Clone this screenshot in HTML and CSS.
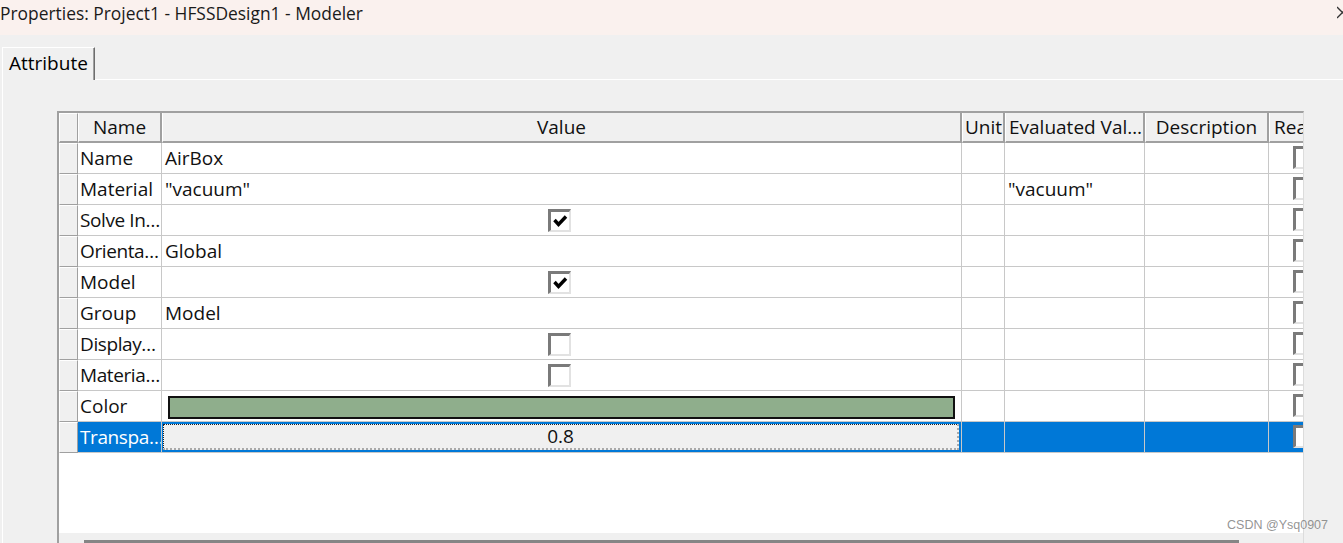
FILE: index.html
```html
<!DOCTYPE html>
<html>
<head>
<meta charset="utf-8">
<link rel="stylesheet" href="styles.css">
</head>
<body>
<div class="window">
  <div class="titlebar">
    <span class="title">Properties: Project1 - HFSSDesign1 - Modeler</span>
    <svg class="close" width="6" height="14" viewBox="0 0 6 14"><path d="M0 2 L11 13 M11 2 L0 13" stroke="#333" stroke-width="1.3" fill="none"/></svg>
  </div>
  <div class="main">
    <div class="tabs">
      <div class="tab">Attribute</div>
      <div class="tab-fill"></div>
    </div>
    <div class="page">
      <div class="grid">
        <div class="row head">
          <div class="rh"></div>
          <div class="hc">Name</div>
          <div class="hc">Value</div>
          <div class="hc">Unit</div>
          <div class="hc">Evaluated Val…</div>
          <div class="hc">Description</div>
          <div class="hc">Read-only</div>
        </div>
        <div class="row">
          <div class="rh"></div><div class="c">Name</div><div class="c">AirBox</div><div class="c"></div><div class="c"></div><div class="c"></div><div class="c ro"><span class="cb"></span></div>
        </div>
        <div class="row">
          <div class="rh"></div><div class="c">Material</div><div class="c">"vacuum"</div><div class="c"></div><div class="c">"vacuum"</div><div class="c"></div><div class="c ro"><span class="cb"></span></div>
        </div>
        <div class="row">
          <div class="rh"></div><div class="c trunc">Solve In…</div><div class="c center"><span class="cb"><svg width="18" height="18" viewBox="0 0 18 18"><path d="M3.5 8 L7.5 12.5 L15 4.5" stroke="#000" stroke-width="3.4" fill="none"/></svg></span></div><div class="c"></div><div class="c"></div><div class="c"></div><div class="c ro"><span class="cb"></span></div>
        </div>
        <div class="row">
          <div class="rh"></div><div class="c trunc">Orienta…</div><div class="c">Global</div><div class="c"></div><div class="c"></div><div class="c"></div><div class="c ro"><span class="cb"></span></div>
        </div>
        <div class="row">
          <div class="rh"></div><div class="c">Model</div><div class="c center"><span class="cb"><svg width="18" height="18" viewBox="0 0 18 18"><path d="M3.5 8 L7.5 12.5 L15 4.5" stroke="#000" stroke-width="3.4" fill="none"/></svg></span></div><div class="c"></div><div class="c"></div><div class="c"></div><div class="c ro"><span class="cb"></span></div>
        </div>
        <div class="row">
          <div class="rh"></div><div class="c">Group</div><div class="c">Model</div><div class="c"></div><div class="c"></div><div class="c"></div><div class="c ro"><span class="cb"></span></div>
        </div>
        <div class="row">
          <div class="rh"></div><div class="c trunc">Display…</div><div class="c center"><span class="cb"></span></div><div class="c"></div><div class="c"></div><div class="c"></div><div class="c ro"><span class="cb"></span></div>
        </div>
        <div class="row">
          <div class="rh"></div><div class="c trunc">Materia…</div><div class="c center"><span class="cb"></span></div><div class="c"></div><div class="c"></div><div class="c"></div><div class="c ro"><span class="cb"></span></div>
        </div>
        <div class="row">
          <div class="rh"></div><div class="c">Color</div><div class="c swcell"><span class="swatch"></span></div><div class="c"></div><div class="c"></div><div class="c"></div><div class="c ro"><span class="cb"></span></div>
        </div>
        <div class="row sel">
          <div class="rh"></div><div class="c trunc">Transpa…</div><div class="c editcell"><span class="edit">0.8</span></div><div class="c"></div><div class="c"></div><div class="c"></div><div class="c ro"><span class="cb"></span></div>
        </div>
        <div class="empty"></div>
        <div class="hscroll"><div class="thumb"></div></div>
      </div>
      <div class="side"></div>
    </div>
  </div>
  <div class="watermark">CSDN @Ysq0907</div>
</div>
</body>
</html>
```

FILE: styles.css
```css
html, body {
  margin: 0;
  padding: 0;
}
body {
  width: 1343px;
  height: 543px;
  overflow: hidden;
  background: #f0f0f0;
  font-family: "Open Sans", "Noto Sans", sans-serif;
  color: #000;
}
.window {
  position: relative;
  width: 1343px;
  height: 543px;
  overflow: hidden;
  display: flex;
  flex-direction: column;
}
.titlebar {
  height: 35px;
  flex: none;
  background: #faf1ee;
  display: flex;
  justify-content: space-between;
  align-items: flex-start;
}
.title {
  font-size: 17.4px;
  line-height: 27px;
  color: #1a1a1a;
  white-space: nowrap;
}
.close {
  margin-top: 5px;
}
.main {
  flex: 1;
  display: flex;
  flex-direction: column;
  min-height: 0;
}
.tabs {
  display: flex;
  padding-top: 12px;
  padding-left: 2px;
  flex: none;
}
.tab {
  height: 33px;
  box-sizing: border-box;
  padding: 0 6px 0 6px;
  border-top: 1px solid #fff;
  border-left: 1px solid #fff;
  border-right: 1px solid #6e6e6e;
  box-shadow: inset -1px 0 0 #a0a0a0;
  font-size: 19px;
  line-height: 30px;
  white-space: nowrap;
}
.tab-fill {
  flex: 1;
  border-bottom: 1px solid #fff;
}
.page {
  flex: 1;
  min-height: 0;
  display: flex;
  padding: 31px 0 0 54px;
  border-left: 1px solid #fff;
  margin-left: 2px;
}
.grid {
  width: 1247px;
  flex: none;
  box-sizing: border-box;
  border-left: 2px solid #a0a0a0;
  border-top: 2px solid #a0a0a0;
  border-right: 1px solid #dcdcdc;
  background: #fff;
  overflow: hidden;
  display: flex;
  flex-direction: column;
}
.side {
  flex: 1;
}
.row {
  display: grid;
  grid-template-columns: 19px 84px 800px 43px 140px 124px 90px;
  height: 31px;
  flex: none;
  font-size: 19px;
}
.row.head {
  height: 30px;
}
.rh {
  box-sizing: border-box;
  background: #f0f0f0;
  border-top: 1px solid #fff;
  border-left: 1px solid #fff;
  border-right: 1px solid #a0a0a0;
  border-bottom: 1px solid #a0a0a0;
}
.head .rh {
  border-bottom: 2px solid #a0a0a0;
}
.hc {
  box-sizing: border-box;
  background: #f0f0f0;
  border-left: 1px solid #fff;
  border-right: 2px solid #a0a0a0;
  border-bottom: 2px solid #a0a0a0;
  text-align: center;
  line-height: 28px;
  white-space: nowrap;
  overflow: hidden;
  color: #111;
}
.hc:nth-child(4) {
  text-align: left;
  padding-left: 2px;
}
.hc:nth-child(5) {
  text-align: left;
  padding-left: 3px;
}
.hc:last-child {
  text-align: left;
  padding-left: 4px;
}
.c {
  box-sizing: border-box;
  border-right: 1px solid #c8c8c8;
  border-bottom: 1px solid #c8c8c8;
  line-height: 30px;
  padding-left: 2px;
  white-space: nowrap;
  overflow: hidden;
  color: #111;
}
.c.trunc {
  letter-spacing: -0.4px;
}
.c:nth-child(3),
.c:nth-child(5) {
  padding-left: 3px;
}
.center {
  display: flex;
  justify-content: center;
  align-items: center;
  padding-left: 0 !important;
  padding-right: 4px;
}
.cb {
  display: inline-block;
  box-sizing: border-box;
  width: 23px;
  height: 23px;
  background: #fff;
  border-top: 3px solid #7a7a7a;
  border-left: 3px solid #7a7a7a;
  border-right: 2px solid #e2e2e2;
  border-bottom: 2px solid #e2e2e2;
  vertical-align: top;
}
.cb svg {
  display: block;
}
.ro {
  padding-left: 24px;
  padding-top: 3px;
}
.swcell {
  padding: 5px 6px 0 6px !important;
}
.swatch {
  display: block;
  height: 23px;
  box-sizing: border-box;
  background: #8fae8c;
  border: 2px solid #111;
}
.sel .c {
  background: #0078d7;
  color: #fff;
}
.sel .c.editcell {
  padding: 2px 2px 2px 1px;
}
.edit {
  display: block;
  height: 26px;
  box-sizing: border-box;
  background: #f0f0f0;
  border-top: 1px dotted #222;
  border-left: 1px dotted #222;
  border-right: 2px dotted #aaa;
  border-bottom: 2px dotted #aaa;
  text-align: center;
  line-height: 23px;
  color: #111;
}
.empty {
  height: 80px;
  flex: none;
}
.hscroll {
  flex: 1;
  background: #f0f0f0;
  padding: 7px 0 0 25px;
}
.thumb {
  width: 1155px;
  height: 6px;
  background: #858585;
}
.watermark {
  position: absolute;
  right: 15px;
  top: 518px;
  font-family: "Liberation Sans", Arial, sans-serif;
  font-size: 12.5px;
  color: rgba(120, 120, 120, 0.8);
  white-space: nowrap;
}
```
